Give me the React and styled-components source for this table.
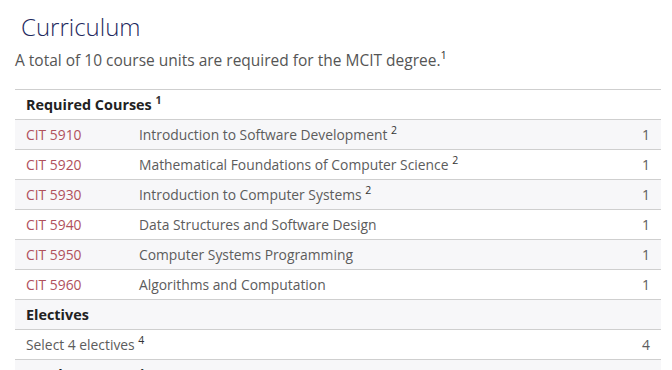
import React from "react";
import styled, { createGlobalStyle } from "styled-components";

const Global = createGlobalStyle`
  html, body { margin: 0; padding: 0; background: #fff; }
  body { font-family: "Open Sans", "Liberation Sans", sans-serif; color: #555; }
`;

const Page = styled.div`
  padding: 0 11px 0 15px;
  width: 646px;
`;

const Title = styled.h2`
  margin: 0;
  padding: 11px 0 0 6px;
  font-size: 24px;
  line-height: 32px;
  font-weight: 300;
  color: #1f2a60;
`;

const Lead = styled.p`
  margin: 5px 0 17px;
  font-size: 15.5px;
  line-height: 24px;
  color: #555;
`;

const Sup = styled.sup`
  font-size: ${(p) => (p.$big ? "11px" : "10.5px")};
  line-height: 0;
  color: #333;
  vertical-align: ${(p) => (p.$big ? "7px" : "6px")};
`;

const Table = styled.table`
  width: 100%;
  border-collapse: collapse;
  font-size: 13.85px;
  border-top: 1px solid #cfcfcf;
`;

const Row = styled.tr`
  height: 30px;
  background: ${(p) => (p.$shade ? "#f7f7f9" : "#fff")};
  border-bottom: 1px solid #cfcfcf;
`;

const Cell = styled.td`
  padding: 0 11px;
  vertical-align: middle;
  white-space: nowrap;
  color: ${(p) => (p.$code ? "#b0505c" : "#5c5c5c")};
  text-align: ${(p) => (p.$num ? "right" : "left")};
  width: ${(p) => (p.$code ? "91px" : "auto")};
`;

const HeadCell = styled.td`
  padding: 0 11px;
  font-size: 14.4px;
  font-weight: 700;
  color: #222;
`;

const courses = [
  { code: "CIT 5910", title: "Introduction to Software Development", note: "2" },
  { code: "CIT 5920", title: "Mathematical Foundations of Computer Science", note: "2" },
  { code: "CIT 5930", title: "Introduction to Computer Systems", note: "2" },
  { code: "CIT 5940", title: "Data Structures and Software Design" },
  { code: "CIT 5950", title: "Computer Systems Programming" },
  { code: "CIT 5960", title: "Algorithms and Computation" },
];

export default function App() {
  let i = 0;
  const shade = () => i++ % 2 === 1;
  return (
    <Page>
      <Global />
      <Title>Curriculum</Title>
      <Lead>
        A total of 10 course units are required for the MCIT degree.<Sup $big>1</Sup>
      </Lead>
      <Table>
        <tbody>
          <Row $shade={shade()}>
            <HeadCell colSpan={3}>
              Required Courses <Sup>1</Sup>
            </HeadCell>
          </Row>
          {courses.map((c) => (
            <Row key={c.code} $shade={shade()}>
              <Cell $code>{c.code}</Cell>
              <Cell>
                {c.title}
                {c.note && <> <Sup>{c.note}</Sup></>}
              </Cell>
              <Cell $num>1</Cell>
            </Row>
          ))}
          <Row $shade={shade()}>
            <HeadCell colSpan={3}>Electives</HeadCell>
          </Row>
          <Row $shade={shade()}>
            <Cell colSpan={2}>
              Select 4 electives <Sup>4</Sup>
            </Cell>
            <Cell $num>4</Cell>
          </Row>
          <Row $shade={shade()}>
            <HeadCell colSpan={2}>Total Course Units</HeadCell>
            <Cell $num>10</Cell>
          </Row>
        </tbody>
      </Table>
    </Page>
  );
}
